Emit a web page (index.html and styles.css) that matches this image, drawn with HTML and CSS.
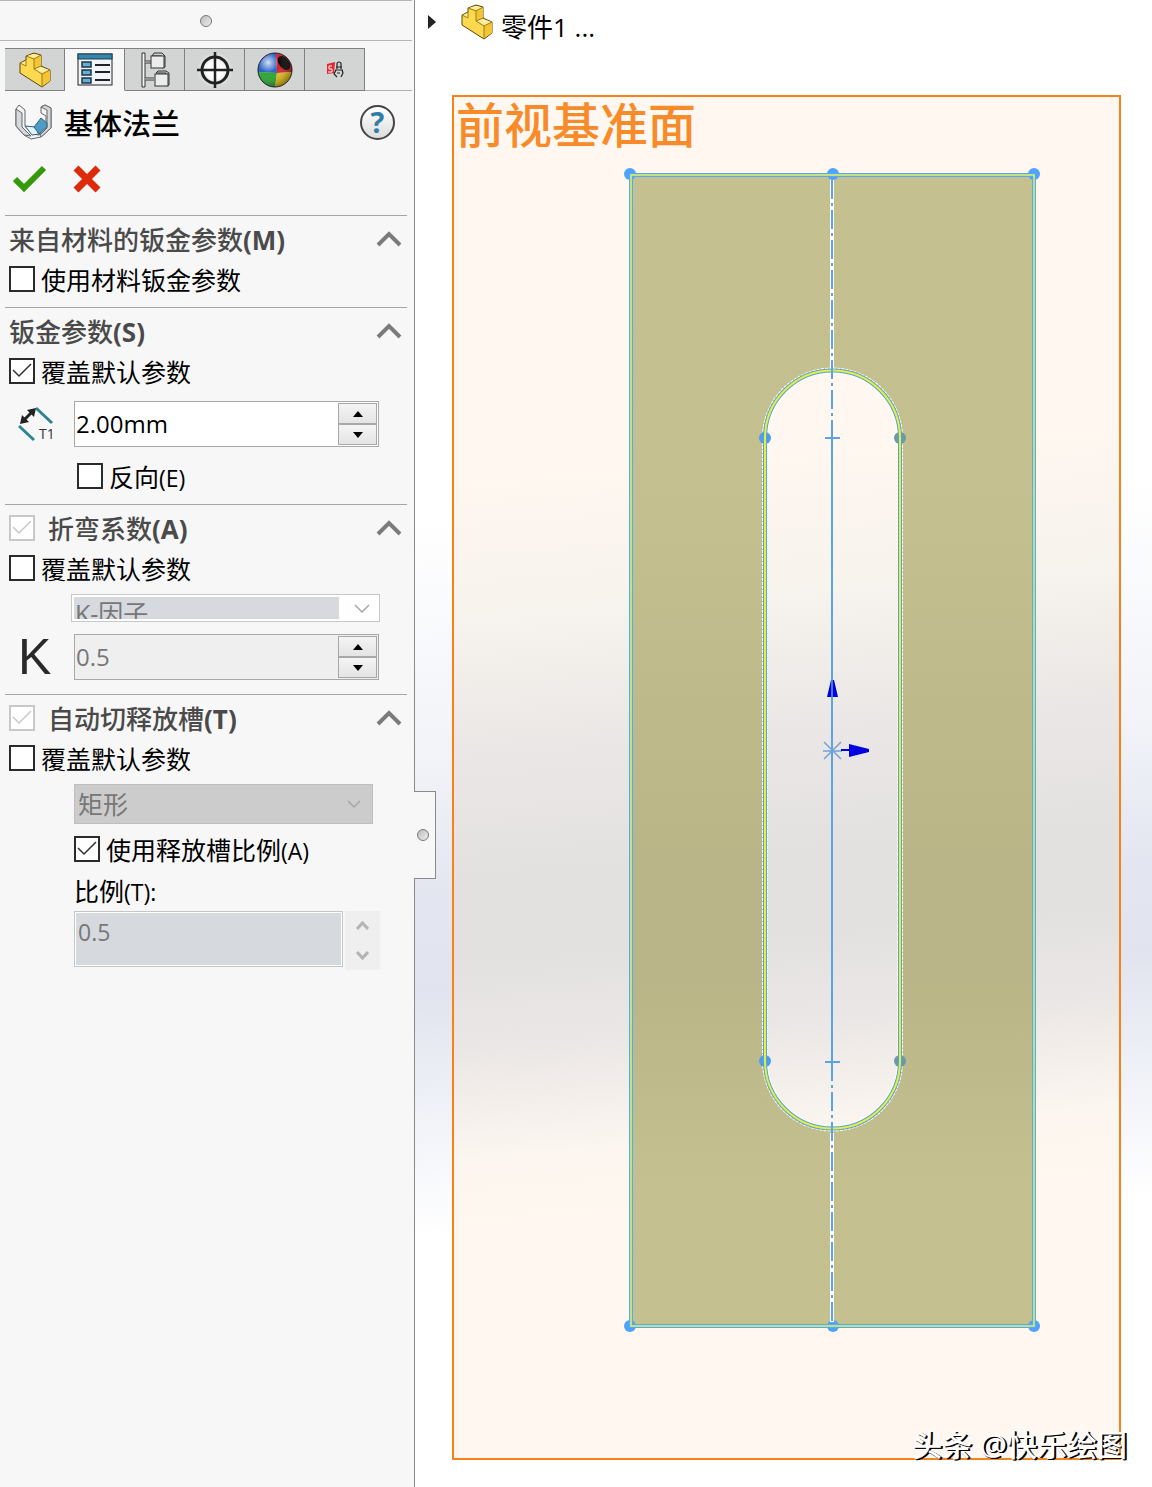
FILE: index.html
```html
<!DOCTYPE html>
<html lang="zh-CN">
<head>
  <meta charset="UTF-8">
  <meta name="viewport" content="width=device-width, initial-scale=1.0">
  <title>基体法兰</title>
  <link rel="stylesheet" href="styles.css">
</head>
<body>

<!-- shared icons -->
<svg class="defs" width="0" height="0" aria-hidden="true">
  <symbol id="icon-part" viewBox="0 0 32 36">
    <path fill="#fcd94f" stroke="#5d4708" stroke-linejoin="round" d="M1 11 7 8V4L15 1 22 3V14L31 18V29L23 35 1 21Z"/>
    <path fill="#fdeda6" d="M8 4 15 2 21 3.500 15 6ZM16 17 22 15 30 18 23 21ZM2 11 7 9V14Z"/>
    <path fill="#f3c534" d="M15 7 22 4V14L15 17ZM23 22 31 18V29L23 34Z"/>
    <path fill="none" stroke="#a07c14" d="M7 4 15 7 22 3M15 7V17L22 14M15 17 23 22 31 18M23 22V35M1 11 7 14V8"/>
  </symbol>
  <symbol id="icon-up" viewBox="0 0 26 16">
    <path fill="none" stroke="#7b7b7b" stroke-width="4" d="M2 14 13 3 24 14"/>
  </symbol>
</svg>

<div class="app">
  <aside class="panel">
    <div class="panel-grip"><span class="dot"></span></div>

    <nav class="tabs">
      <button class="tab" type="button" aria-label="零件">
        <svg width="32" height="36"><use href="#icon-part"/></svg>
      </button>
      <button class="tab active" type="button" aria-label="属性">
        <svg width="36" height="34" viewBox="0 0 36 34">
          <rect x="1" y="1" width="34" height="31" fill="#f2f5f7" stroke="#222"/>
          <rect x="1" y="1" width="34" height="5" fill="#3585ac" stroke="#1d4356"/>
          <g fill="#63aed2" stroke="#1b3644" stroke-width="1.5">
            <rect x="5" y="9" width="9" height="5"/><rect x="5" y="17" width="9" height="5"/><rect x="5" y="25" width="9" height="5"/>
          </g>
          <path stroke="#222" stroke-width="2" d="M18 12H33M18 19H33M18 27H33"/>
        </svg>
      </button>
      <button class="tab" type="button" aria-label="配置">
        <svg width="30" height="36" viewBox="0 0 30 36">
          <path fill="#f4f4f4" stroke="#333" d="M2 1H5V35H2Z"/>
          <path fill="none" stroke="#333" stroke-width="3" d="M5 10H12M5 27H14"/>
          <path stroke="#eee" d="M5 10H12M5 27H14"/>
          <g fill="#cfcfcf" stroke="#333">
            <path d="M12 4 14 1H22L25 4V15L22 16V4Z"/>
            <path d="M16 21 18 19H26L29 21V33L26 34V21Z"/>
          </g>
          <g fill="#ececec" stroke="#333">
            <rect x="11" y="4" width="13" height="12"/>
            <rect x="15" y="22" width="13" height="12"/>
          </g>
        </svg>
      </button>
      <button class="tab" type="button" aria-label="尺寸专家">
        <svg class="glow" width="36" height="36" viewBox="0 0 36 36">
          <circle cx="18" cy="18" r="13" fill="none" stroke="#222" stroke-width="3"/>
          <path stroke="#222" stroke-width="2.5" d="M18 0V36M0 18H36"/>
        </svg>
      </button>
      <button class="tab" type="button" aria-label="外观">
        <svg width="36" height="36" viewBox="0 0 36 36">
          <defs>
            <radialGradient id="shine" cx="30%" cy="28%" r="75%">
              <stop offset="0" stop-color="#fff" stop-opacity=".8"/>
              <stop offset=".4" stop-color="#fff" stop-opacity="0"/>
              <stop offset="1" stop-color="#000" stop-opacity=".35"/>
            </radialGradient>
          </defs>
          <path fill="#2a62c4" d="M1 20A17 17 0 0 1 19 1L20 21Z"/>
          <path fill="#d21f2c" d="M19 1A17 17 0 0 1 35 20L20 21Z"/>
          <path fill="#2aa52f" d="M1 20 20 21 18 35A17 17 0 0 1 1 20Z"/>
          <path fill="#e8c21a" d="M20 21 35 20A17 17 0 0 1 18 35Z"/>
          <ellipse cx="27" cy="11" rx="5" ry="8" transform="rotate(-38 27 11)" fill="#080808"/>
          <circle cx="18" cy="18" r="17" fill="url(#shine)" stroke="#223"/>
        </svg>
      </button>
      <button class="tab" type="button" aria-label="插件">
        <svg width="18" height="18" viewBox="0 0 18 18">
          <path fill="#e5262d" d="M1 3 9 1 8 12 1 13Z"/>
          <path fill="none" stroke="#fff" d="M6 5H3V8H6V11H2"/>
          <path fill="none" stroke="#222" stroke-width="1.2" d="M11 8V3A2 2 0 0 1 15 3V8M10 6H16M9 9H17M10 9 8 13 11 16M16 9 17 12 15 16M11 12H14"/>
        </svg>
      </button>
      <span class="tabs-rest"></span>
    </nav>

    <header class="title-row">
      <svg width="37" height="36" viewBox="0 0 37 36">
        <path fill="#f3f4f5" stroke="#666" stroke-linejoin="round" d="M1 5 4 1 10 6V22L17 30 24 31 31 22V12L26 9V3L30 1 36 4V24L26 33 16 35 9 31 1 22Z"/>
        <path fill="#d5d9dc" stroke="#666" stroke-linejoin="round" d="M1 5 7 9V23L16 32 9 31 1 22ZM26 3 32 6V24L25 31 26 33 36 24V4L30 1Z"/>
        <path fill="#e3f1f8" stroke="#35647c" stroke-linejoin="round" d="M10 22 20 23 24 30 17 31Z"/>
        <path fill="#4c9cc6" stroke="#35647c" stroke-linejoin="round" d="M19 23 26 14 32 19V23L24 30Z"/>
      </svg>
      <h1>基体法兰</h1>
      <button class="help" type="button" aria-label="帮助">?</button>
    </header>

    <div class="actions">
      <button class="plain" type="button" aria-label="确定">
        <svg width="34" height="28" viewBox="0 0 34 28"><path fill="none" stroke="#36990c" stroke-width="6" d="M2 14 11 23 31 3"/></svg>
      </button>
      <button class="plain" type="button" aria-label="取消">
        <svg width="28" height="28" viewBox="0 0 28 28"><path fill="none" stroke="#dd2a0b" stroke-width="7" d="M3 3 25 25M25 3 3 25"/></svg>
      </button>
    </div>

    <section class="group">
      <div class="group-head">
        <h2>来自材料的钣金参数<b>(M)</b></h2>
        <button class="plain" type="button" aria-label="折叠"><svg width="26" height="16"><use href="#icon-up"/></svg></button>
      </div>
      <label class="check"><input type="checkbox">使用材料钣金参数</label>
    </section>

    <section class="group">
      <div class="group-head">
        <h2>钣金参数<b>(S)</b></h2>
        <button class="plain" type="button" aria-label="折叠"><svg width="26" height="16"><use href="#icon-up"/></svg></button>
      </div>
      <label class="check"><input type="checkbox" checked>覆盖默认参数</label>
      <div class="field thickness">
        <label class="field-icon" for="thickness" aria-label="厚度">
          <svg width="37" height="36" viewBox="0 0 37 36">
            <path fill="none" stroke="#2f8494" stroke-width="3" d="M18 2 34 17M1 20 16 34"/>
            <path stroke="#222" stroke-width="3" d="M6 14 14 6"/>
            <path fill="#222" d="M2 18 4 9 11 16ZM18 2 16 11 9 4Z"/>
            <text x="21" y="33" class="t1">T1</text>
          </svg>
        </label>
        <div class="spin">
          <input id="thickness" type="text" value="2.00mm">
          <div class="spin-buttons">
            <button type="button" aria-label="增加"><i class="tri up"></i></button>
            <button type="button" aria-label="减少"><i class="tri down"></i></button>
          </div>
        </div>
      </div>
      <label class="check reverse"><input type="checkbox"><span>反向<small>(E)</small></span></label>
    </section>

    <section class="group">
      <div class="group-head">
        <input id="bend" type="checkbox" checked disabled>
        <h2><label for="bend">折弯系数<b>(A)</b></label></h2>
        <button class="plain" type="button" aria-label="折叠"><svg width="26" height="16"><use href="#icon-up"/></svg></button>
      </div>
      <label class="check"><input type="checkbox">覆盖默认参数</label>
      <div class="combo">
        <select aria-label="折弯系数类型" disabled><option>K-因子</option></select>
        <svg width="16" height="9" viewBox="0 0 16 9"><path fill="none" stroke="#a8a8a8" stroke-width="1.5" d="M1 1 8 8 15 1"/></svg>
      </div>
      <div class="field k-factor">
        <label class="field-icon k" for="kfactor">K</label>
        <div class="spin off">
          <input id="kfactor" type="text" value="0.5" disabled>
          <div class="spin-buttons">
            <button type="button" aria-label="增加"><i class="tri up"></i></button>
            <button type="button" aria-label="减少"><i class="tri down"></i></button>
          </div>
        </div>
      </div>
    </section>

    <section class="group">
      <div class="group-head">
        <input id="relief" type="checkbox" checked disabled>
        <h2><label for="relief">自动切释放槽<b>(T)</b></label></h2>
        <button class="plain" type="button" aria-label="折叠"><svg width="26" height="16"><use href="#icon-up"/></svg></button>
      </div>
      <label class="check"><input type="checkbox">覆盖默认参数</label>
      <div class="relief">
        <select class="shape" aria-label="释放槽类型" disabled><option>矩形</option></select>
        <label class="check"><input type="checkbox" checked><span>使用释放槽比例<small>(A)</small></span></label>
        <label class="ratio-label" for="ratio">比例<small>(T):</small></label>
        <div class="ratio">
          <div class="ratio-box"><input id="ratio" type="text" value="0.5" disabled></div>
          <div class="ratio-spin">
            <button class="plain" type="button" aria-label="增加" disabled><svg width="13" height="9" viewBox="0 0 13 9"><path fill="none" stroke="#b4b4b4" stroke-width="3" d="M1 8 6.500 2 12 8"/></svg></button>
            <button class="plain" type="button" aria-label="减少" disabled><svg width="13" height="9" viewBox="0 0 13 9"><path fill="none" stroke="#b4b4b4" stroke-width="3" d="M1 1 6.500 7 12 1"/></svg></button>
          </div>
        </div>
      </div>
    </section>

    <div class="side-grip"><span class="dot"></span></div>
  </aside>

  <main class="canvas">
    <div class="tree">
      <svg width="8" height="14" viewBox="0 0 8 14"><path fill="#222" d="M0 0 8 7 0 14Z"/></svg>
      <svg class="tree-icon" width="32" height="36"><use href="#icon-part"/></svg>
      <span class="tree-name">零件1 ...</span>
    </div>

    <svg class="sketch" viewBox="415 50 737 1437">
      <defs>
        <linearGradient id="plane" x1="0" y1="0" x2=".04" y2="1">
          <stop offset=".28" stop-color="#fff7f0"/>
          <stop offset=".38" stop-color="#f7f3ed"/>
          <stop offset=".48" stop-color="#ebe7e6"/>
          <stop offset=".58" stop-color="#e2e1e0"/>
          <stop offset=".63" stop-color="#e2e1e0"/>
          <stop offset=".7" stop-color="#ebe7e6"/>
          <stop offset=".78" stop-color="#fbf6ef"/>
          <stop offset=".83" stop-color="#fff7f0"/>
        </linearGradient>
        <linearGradient id="face" x1="0" y1="0" x2="0" y2="1">
          <stop offset="0" stop-color="#c4c08f"/>
          <stop offset=".3" stop-color="#c3bf8e"/>
          <stop offset=".6" stop-color="#b9b588"/>
          <stop offset=".7" stop-color="#b9b588"/>
          <stop offset=".86" stop-color="#c3bf8e"/>
          <stop offset="1" stop-color="#c4c08f"/>
        </linearGradient>
      </defs>

      <!-- front plane -->
      <rect x="453" y="96" width="667" height="1363" fill="url(#plane)" stroke="#f5831a" stroke-width="2"/>
      <text x="456" y="143" class="plane-name">前视基准面</text>

      <!-- plate with slot -->
      <path fill="url(#face)" fill-rule="evenodd" d="M630 174H1034V1326H630ZM765 438V1061A67 67 0 0 0 900 1061V438A67 67 0 0 0 765 438Z"/>
      <g fill="#4da3ff">
        <circle cx="630" cy="174" r="6"/><circle cx="833" cy="174" r="6"/><circle cx="1034" cy="174" r="6"/>
        <circle cx="630" cy="1326" r="6"/><circle cx="833" cy="1326" r="6"/><circle cx="1034" cy="1326" r="6"/>
      </g>
      <g fill="none">
        <rect x="631" y="175" width="403" height="1151" stroke="#5aa9ea" stroke-width="4"/>
        <rect x="631" y="175" width="403" height="1151" stroke="#e2f36a" stroke-width="1.500"/>
        <path stroke="#fff" stroke-width="6" stroke-dasharray="3 1" d="M765 438V1061A67 67 0 0 0 900 1061V438A67 67 0 0 0 765 438Z"/>
      </g>
      <g fill="#4d9df0">
        <circle cx="765" cy="438" r="6"/><circle cx="900" cy="438" r="6" fill="#6a99ab"/>
        <circle cx="765" cy="1061" r="6"/><circle cx="900" cy="1061" r="6" fill="#6a99ab"/>
      </g>
      <g fill="none">
        <path stroke="#5a9fd8" stroke-width="4" d="M765 438V1061A67 67 0 0 0 900 1061V438A67 67 0 0 0 765 438Z"/>
        <path stroke="#e2f040" stroke-width="2" d="M765 438V1061A67 67 0 0 0 900 1061V438A67 67 0 0 0 765 438Z"/>
        <path stroke="#fff" stroke-width="4" d="M832 180V368M832 1133V1322"/>
        <path stroke="#5aa3e6" stroke-width="2" stroke-dasharray="19 4 3 4" d="M832 180V438M832 1062V1322"/>
        <path stroke="#5aa3e6" stroke-width="2" d="M832 438V1062M825 438H840M825 1062H840"/>
      </g>

      <!-- origin -->
      <path stroke="#6fa3d8" stroke-width="1.500" d="M824 742 841 759M841 742 824 759M823 751H842"/>
      <path stroke="#0202e0" stroke-width="2" d="M841 750H850"/>
      <path fill="#0202e0" d="M849 744 869 749V752L849 757ZM827 697 831 680H834L838 697Z"/>
      <path stroke="#5aa3e6" stroke-width="1.500" d="M832 678V700"/>
    </svg>

    <span class="credit">头条 @快乐绘图</span>
  </main>
</div>

</body>
</html>
```
FILE: styles.css
```css
* {
  box-sizing: border-box;
}
body {
  margin: 0;
  font-family: "Open Sans", "Noto Sans CJK SC", sans-serif;
  font-size: 25px;
  color: #000;
}
button, input, select {
  font: inherit;
  margin: 0;
}
h1, h2 {
  margin: 0;
  font-weight: 500;
}
small {
  font-size: 23px;
}
svg {
  display: block;
}
.defs {
  position: absolute;
}
.app {
  display: flex;
  min-height: 100vh;
}

/* left panel */
.panel {
  position: relative;
  flex: 0 0 415px;
  min-width: 0;
  background: #f7f7f7;
  border-right: 1px solid #8a8a8a;
}
.panel-grip {
  display: flex;
  align-items: center;
  justify-content: center;
  height: 41px;
  margin-right: 2px;
  border-top: 1px solid #b5b5b5;
  border-bottom: 1px solid #b5b5b5;
}
.dot {
  width: 12px;
  height: 12px;
  border: 1px solid #777;
  border-radius: 50%;
  background: linear-gradient(135deg, #bbb, #eee);
}
.side-grip {
  position: absolute;
  left: 100%;
  top: 791px;
  z-index: 1;
  display: flex;
  align-items: center;
  justify-content: center;
  width: 22px;
  height: 88px;
  padding-right: 3px;
  background: #f7f7f7;
  border: 1px solid #8a8a8a;
  border-left: 0;
}
.tabs {
  display: flex;
  height: 43px;
  margin: 7px 2px 0 0;
  padding-left: 5px;
}
.tab {
  display: flex;
  align-items: center;
  justify-content: center;
  width: 60px;
  padding: 0;
  background: #d3d4d4;
  border: 1px solid #808080;
  border-left: 0;
}
.tab.active {
  background: #f7f7f7;
  border-bottom-color: #f7f7f7;
}
.tabs-rest {
  flex: 1;
  border-bottom: 1px solid #b0b0b0;
}
.glow {
  background: radial-gradient(#fff 30%, transparent 70%);
}
.title-row {
  display: flex;
  align-items: center;
  gap: 12px;
  height: 62px;
  padding: 0 19px 0 15px;
}
h1 {
  flex: 1;
  font-size: 29px;
}
.help {
  width: 35px;
  height: 35px;
  padding: 0;
  border: 2px solid #444;
  border-radius: 50%;
  background: linear-gradient(#fff, #ddd);
  color: #2f7ea6;
  font-size: 29px;
  font-weight: 700;
  line-height: 30px;
}
.plain {
  padding: 0;
  border: 0;
  background: none;
}
.actions {
  display: flex;
  align-items: center;
  gap: 26px;
  height: 62px;
  padding: 0 13px 10px;
}

/* groups */
.group {
  margin: 0 7px 0 5px;
  padding: 3px 5px 8px 4px;
  border-top: 1px solid #a5a5a5;
}
.group-head {
  display: flex;
  align-items: center;
  height: 40px;
}
.group-head h2 {
  flex: 1;
  color: #4a4a4a;
  font-size: 26px;
}
.group-head input + h2 {
  padding-left: 13px;
}
.check {
  display: flex;
  align-items: center;
  gap: 6px;
  height: 40px;
}
input[type="checkbox"] {
  appearance: none;
  width: 26px;
  height: 26px;
  border: 2px solid #2b2b2b;
  background: #fff;
}
input[type="checkbox"]:checked {
  background: #fff url("data:image/svg+xml,%3Csvg xmlns='http://www.w3.org/2000/svg' viewBox='0 0 22 22'%3E%3Cpath d='M2 10l6 6L20 4' fill='none' stroke='%23333' stroke-width='1.500'/%3E%3C/svg%3E");
}
input[type="checkbox"]:disabled {
  border-color: #c8c8c8;
  background-image: url("data:image/svg+xml,%3Csvg xmlns='http://www.w3.org/2000/svg' viewBox='0 0 22 22'%3E%3Cpath d='M2 10l6 6L20 4' fill='none' stroke='%23c8c8c8' stroke-width='1.500'/%3E%3C/svg%3E");
}
.field {
  display: flex;
  align-items: center;
  margin-right: 23px;
}
.thickness {
  margin-top: 10px;
}
.field-icon {
  display: flex;
  flex: 0 0 65px;
  padding-left: 9px;
}
.t1 {
  font-size: 14px;
  fill: #333;
}
.k {
  color: #2a2a2a;
  font-family: "Liberation Sans", sans-serif;
  font-size: 50px;
  line-height: 46px;
}
.spin {
  display: flex;
  flex: 1;
  min-width: 0;
  height: 46px;
  border: 1px solid #a8a8a8;
  background: #fff;
}
.spin.off {
  background: #efefef;
}
.spin input {
  flex: 1;
  min-width: 0;
  padding: 0 1px 2px;
  border: 0;
  background: none;
  font-size: 24px;
}
input:disabled, select:disabled {
  color: #777;
  opacity: 1;
}
.spin-buttons {
  display: flex;
  flex-direction: column;
  width: 41px;
  padding: 1px;
}
.spin-buttons button {
  display: flex;
  flex: 1;
  align-items: center;
  justify-content: center;
  padding: 0;
  border: 1px solid #a8a8a8;
  background: linear-gradient(#f4f4f4, #e4e4e4);
}
.tri {
  border: 5px solid transparent;
}
.tri.up {
  border-top: 0;
  border-bottom: 6px solid #000;
}
.tri.down {
  border-bottom: 0;
  border-top: 6px solid #000;
}
.reverse {
  margin: 9px 0 0 68px;
}
.combo {
  display: flex;
  align-items: center;
  height: 28px;
  margin: 6px 22px 12px 62px;
  padding: 2px 9px 2px 2px;
  gap: 15px;
  border: 1px solid #c8c8c8;
  background: #fff;
}
.combo select {
  flex: 1;
  min-width: 0;
  height: 22px;
  padding: 1px 0 0 1px;
  overflow: hidden;
  appearance: none;
  border: 0;
  border-radius: 0;
  background: #d6d9de;
  line-height: 30px;
}
.k-factor {
  margin-bottom: 6px;
}
.relief {
  display: flex;
  flex-direction: column;
  padding: 6px 22px 0 65px;
}
.shape {
  appearance: none;
  height: 40px;
  margin: 0 7px 5px 0;
  padding: 0 3px;
  border: 1px solid #bfbfbf;
  border-radius: 0;
  background: #ccc url("data:image/svg+xml,%3Csvg xmlns='http://www.w3.org/2000/svg' width='14' height='9'%3E%3Cpath d='M1 1l6 6 6-6' fill='none' stroke='%23a5a5a5' stroke-width='1.500'/%3E%3C/svg%3E") no-repeat right 11px center;
}
.ratio-label {
  height: 42px;
  line-height: 44px;
}
.ratio {
  display: flex;
  gap: 2px;
}
.ratio-box {
  flex: 1;
  min-width: 0;
  height: 56px;
  padding: 1px;
  border: 1px solid #c3c7ca;
  background: #fff;
}
.ratio-box input {
  display: block;
  width: 100%;
  height: 52px;
  padding: 0 2px 14px;
  border: 0;
  background: #d6dade;
  font-size: 23px;
}
.ratio-spin {
  display: flex;
  flex-direction: column;
  align-items: center;
  justify-content: space-around;
  width: 35px;
  height: 59px;
  background: #efefef;
}

/* graphics area */
.canvas {
  position: relative;
  flex: 1;
  min-width: 0;
  background: linear-gradient(177deg, #fff 34%, #f1f3f8 50%, #e3e6f0 59%, #e1e4ee 65%, #f0f2f8 73%, #fff 81%);
}
.tree {
  display: flex;
  align-items: center;
  height: 50px;
  padding: 0 0 6px 13px;
}
.tree-icon {
  margin: 0 8px 0 25px;
}
.tree-name {
  padding-top: 8px;
  font-size: 26px;
}
.sketch {
  width: 100%;
  height: auto;
}
.plane-name {
  fill: #f78b2a;
  font-family: "Noto Sans CJK SC", sans-serif;
  font-size: 48px;
  font-weight: 500;
}
.credit {
  position: absolute;
  right: 25px;
  bottom: 21px;
  color: #fff;
  font-size: 30px;
  font-weight: 500;
  line-height: 42px;
  text-shadow: 1px 1px 0 #000, 2px 1px 0 #000;
}
```
